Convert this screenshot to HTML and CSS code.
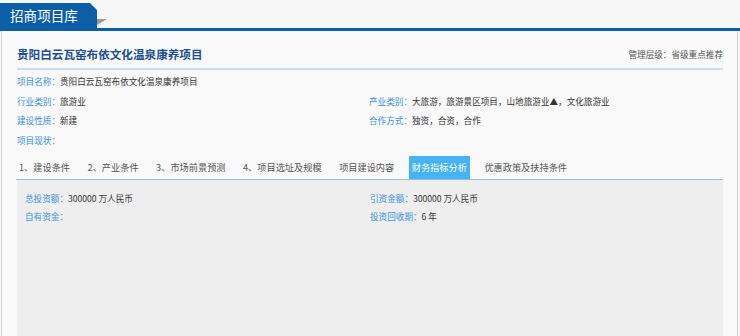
FILE: index.html
```html
<!DOCTYPE html>
<html lang="zh-CN">
<head>
<meta charset="utf-8">
<title>招商项目库</title>
<link rel="stylesheet" href="styles.css">
</head>
<body>
<div class="page">
  <div class="header">
    <div class="tab-title">招商项目库</div>
    <div class="fold"></div>
  </div>
  <div class="box">
    <div class="title-row">
      <h1 class="title">贵阳白云瓦窑布依文化温泉康养项目</h1>
      <div class="level">管理层级：省级重点推荐</div>
    </div>
    <div class="info">
      <div class="row full"><span class="lbl">项目名称：</span><span class="val">贵阳白云瓦窑布依文化温泉康养项目</span></div>
      <div class="row"><span class="lbl">行业类别：</span><span class="val">旅游业</span></div>
      <div class="row"><span class="lbl">产业类别：</span><span class="val">大旅游，旅游景区项目，山地旅游业▲，文化旅游业</span></div>
      <div class="row"><span class="lbl">建设性质：</span><span class="val">新建</span></div>
      <div class="row"><span class="lbl">合作方式：</span><span class="val">独资，合资，合作</span></div>
      <div class="row full"><span class="lbl">项目现状：</span><span class="val"></span></div>
    </div>
    <div class="tabs">
      <div class="tb">1、建设条件</div>
      <div class="tb">2、产业条件</div>
      <div class="tb">3、市场前景预测</div>
      <div class="tb">4、项目选址及规模</div>
      <div class="tb">项目建设内容</div>
      <div class="tb active">财务指标分析</div>
      <div class="tb">优惠政策及扶持条件</div>
    </div>
    <div class="panel">
      <div class="prow"><span class="lbl">总投资额：</span><span class="val">300000 万人民币</span></div>
      <div class="prow"><span class="lbl">引资金额：</span><span class="val">300000 万人民币</span></div>
      <div class="prow"><span class="lbl">自有资金：</span><span class="val"></span></div>
      <div class="prow"><span class="lbl">投资回收期：</span><span class="val">6 年</span></div>
    </div>
  </div>
</div>
</body>
</html>
```

FILE: styles.css
```css
html, body {
  margin: 0;
  padding: 0;
  background: #f7f7f7;
  overflow: hidden;
}
body {
  font-family: "Noto Sans CJK SC", "Noto Sans", sans-serif;
  width: 740px;
  height: 336px;
}
.page {
  display: flex;
  flex-direction: column;
  height: 336px;
}
.header {
  position: relative;
  height: 25px;
  padding-top: 3px;
  box-sizing: content-box;
  border-bottom: 3px solid #0c5ea7;
  display: flex;
}
.tab-title {
  width: 97px;
  height: 25px;
  box-sizing: border-box;
  background: #0c5ea7;
  color: #fff;
  font-size: 13.6px;
  line-height: 24px;
  padding-left: 10px;
  clip-path: polygon(0 0, 90px 0, 97px 7px, 97px 100%, 0 100%);
}
.fold {
  position: absolute;
  left: 97px;
  top: 19px;
  width: 0;
  height: 0;
  border-top: 6px solid #9a9a9a;
  border-right: 10px solid transparent;
}
.box {
  flex: 1;
  margin: 0 2px 0 1px;
  border-left: 1px solid #d6d6d6;
  border-right: 1px solid #cfcfcf;
  background: #f9f9f9;
  padding: 13px 14px 0 15px;
  display: flex;
  flex-direction: column;
}
.title-row {
  display: flex;
  justify-content: space-between;
  align-items: center;
  height: 24px;
  align-items: flex-start;
  border-bottom: 2px solid #c9dcf1;
}
.title {
  margin: 0;
  font-size: 11.6px;
  line-height: 20px;
  font-weight: bold;
  color: #1c4f90;
}
.level {
  font-size: 8.6px;
  line-height: 20px;
  color: #555;
}
.info {
  display: grid;
  grid-template-columns: 352px 1fr;
  padding-top: 2px;
}
.row {
  height: 19.7px;
  line-height: 19.7px;
  font-size: 8.6px;
  white-space: nowrap;
}
.row.full {
  grid-column: 1 / 3;
}
.lbl {
  color: #3a91e6;
}
.val {
  color: #333;
}
.tabs {
  display: flex;
  gap: 11.5px;
  margin-top: 5px;
  height: 23px;
  border-bottom: 1px solid #8cc3ee;
  margin-left: -1px;
}
.tb {
  font-size: 9.2px;
  line-height: 23px;
  padding: 0 3px;
  color: #555;
  white-space: nowrap;
}
.tb.active {
  background: #45b3f6;
  color: #fff;
}
.panel {
  flex: 1;
  background: #eeeeee;
  padding: 9px 8px 0 8px;
  display: grid;
  grid-template-columns: 345px 1fr;
  grid-auto-rows: 18px;
  align-content: start;
}
.prow {
  font-size: 8.6px;
  line-height: 18px;
  white-space: nowrap;
}
```
